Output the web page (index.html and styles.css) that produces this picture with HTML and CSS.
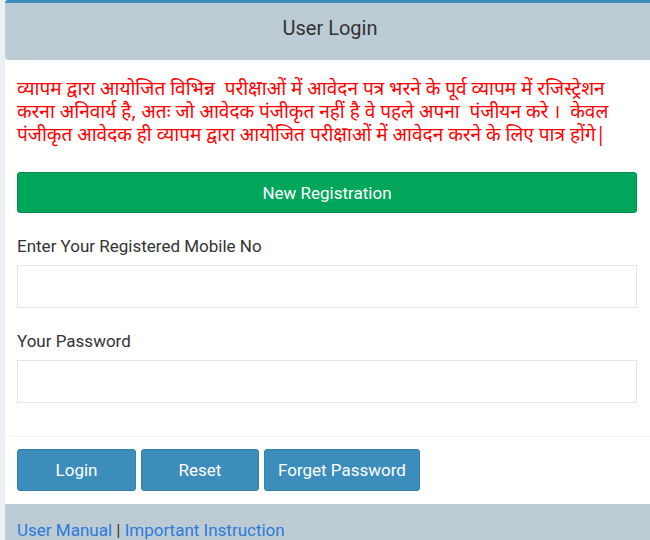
FILE: index.html
```html
<!DOCTYPE html>
<html lang="hi">
<head>
    <meta charset="UTF-8">
    <meta name="viewport" content="width=device-width, initial-scale=1.0">
    <title>User Login</title>
    <link rel="stylesheet" href="styles.css">
</head>
<body>
    <div class="box">
        <div class="box-header">
            <h3>User Login</h3>
        </div>

        <div class="box-body">
            <!-- Notice -->
            <p class="notice">व्यापम द्वारा आयोजित विभिन्न&nbsp; परीक्षाओं में आवेदन पत्र भरने के पूर्व व्यापम में रजिस्ट्रेशन<br>करना अनिवार्य है, अतः जो आवेदक पंजीकृत नहीं है वे पहले अपना&nbsp; पंजीयन करे ।&nbsp; केवल<br>पंजीकृत आवेदक ही व्यापम द्वारा आयोजित परीक्षाओं में आवेदन करने के लिए पात्र होंगे|</p>

            <button class="btn btn-success">New Registration</button>

            <div class="form-group">
                <label for="mobile">Enter Your Registered Mobile No</label>
                <input type="text" id="mobile" class="form-control">
            </div>

            <div class="form-group">
                <label for="password">Your Password</label>
                <input type="password" id="password" class="form-control">
            </div>
        </div>

        <div class="box-actions">
            <button class="btn btn-primary btn-login">Login</button>
            <button class="btn btn-primary btn-reset">Reset</button>
            <button class="btn btn-primary">Forget Password</button>
        </div>

        <div class="box-footer">
            <a href="#">User Manual</a> | <a href="#">Important Instruction</a>
        </div>
    </div>
</body>
</html>
```

FILE: styles.css
```css
/* Reset */
* {
    margin: 0;
    padding: 0;
    box-sizing: border-box;
}

body {
    font-family: Roboto, 'Noto Sans', sans-serif;
    background-color: #ecf0f5;
    color: #333;
    overflow: hidden;
}

/* Panel */
.box {
    margin-left: 5px;
    margin-right: -5px;
    background-color: #fff;
    border-top: 3px solid #3c8dbc;
    border-radius: 3px;
}

.box-header {
    background-color: #bdcbd4;
    height: 57px;
    display: flex;
    align-items: center;
    justify-content: center;
    border-radius: 0 0 4px 4px;
}

.box-header h3 {
    font-size: 20px;
    font-weight: 400;
    color: #333;
    margin-top: -7px;
}

.box-body {
    padding: 17px 18px 0 12px;
}

/* Notice text */
.notice {
    font-family: 'Noto Sans', sans-serif;
    color: #f00;
    font-size: 19px;
    line-height: 23px;
    white-space: nowrap;
    margin-bottom: 26px;
}

/* Buttons */
.btn {
    font-family: Roboto, sans-serif;
    font-size: 17px;
    color: #fff;
    border-radius: 3px;
    cursor: pointer;
}

.btn-success {
    display: block;
    width: 100%;
    height: 41px;
    background-color: #00a65a;
    border: 1px solid #008d4c;
}

.btn-primary {
    height: 42px;
    padding: 0 13px;
    background-color: #3c8dbc;
    border: 1px solid #367fa9;
}

.btn-login {
    width: 119px;
}

.btn-reset {
    width: 118px;
}

/* Form */
.form-group {
    margin-top: 23px;
}

.form-group + .form-group {
    margin-top: 23px;
}

.form-group label {
    display: block;
    font-size: 17px;
    line-height: 20px;
    margin-bottom: 9px;
}

.form-control {
    display: block;
    width: 100%;
    height: 43px;
    border: 1px solid #e4e4e4;
    background-color: #fff;
    padding: 6px 12px;
    font-size: 16px;
}

/* Actions */
.box-actions {
    margin-top: 33px;
    border-top: 1px solid #f4f4f4;
    padding: 12px 18px 13px 12px;
    display: flex;
    gap: 5px;
}

/* Footer */
.box-footer {
    background-color: #bdcbd4;
    padding: 16px 12px 20px;
    font-size: 17px;
    color: #333;
}

.box-footer a {
    color: #2a7bd8;
    text-decoration: none;
}
```
